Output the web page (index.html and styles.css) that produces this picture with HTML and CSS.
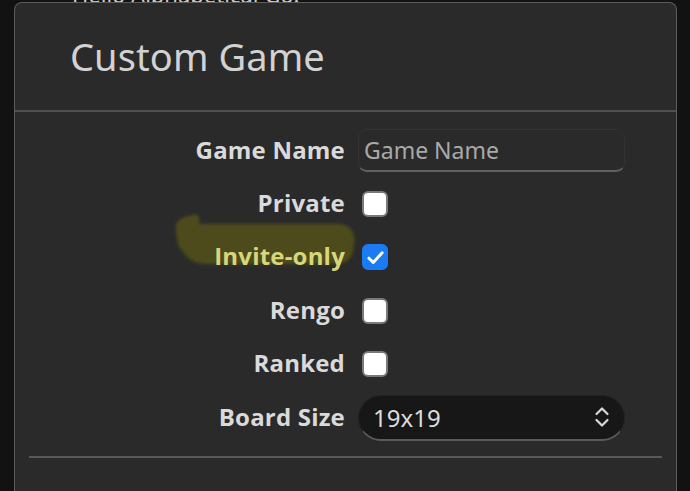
FILE: index.html
```html
<!DOCTYPE html>
<html lang="en">

<head>
    <meta charset="utf-8">
    <title>Custom Game</title>
    <link rel="stylesheet" href="styles.css">
</head>

<body>
<div class="behind">Hello Alphabetical Go!</div>

<div class="dialog">
    <div class="dlgHead">
        <h1 class="title">Custom Game</h1>
    </div>

    <div class="dlgBody">
        <label class="lbl" for="gname">Game Name</label>
        <div class="ctl">
            <input type="text" id="gname" class="txt" placeholder="Game Name"/>
        </div>

        <label class="lbl" for="private">Private</label>
        <div class="ctl">
            <span class="box" id="private"></span>
        </div>

        <label class="lbl marked" for="invite"><span class="hl"><i class="marker"></i><b>Invite-only</b></span></label>
        <div class="ctl">
            <span class="box on" id="invite">
                <svg viewBox="0 0 24 24" width="21" height="21">
                    <path d="M4.5 12.8l4.9 4.9L19.6 6.6" fill="none" stroke="#fff" stroke-width="3.4" stroke-linecap="round" stroke-linejoin="round"/>
                </svg>
            </span>
        </div>

        <label class="lbl" for="rengo">Rengo</label>
        <div class="ctl">
            <span class="box" id="rengo"></span>
        </div>

        <label class="lbl" for="ranked">Ranked</label>
        <div class="ctl">
            <span class="box" id="ranked"></span>
        </div>

        <label class="lbl" for="bsize">Board Size</label>
        <div class="ctl">
            <div class="sel" id="bsize">
                <span>19x19</span>
                <svg class="chev" viewBox="0 0 16 24" width="16" height="24">
                    <path d="M2.5 9L8 3.5 13.5 9M2.5 15L8 20.5 13.5 15" fill="none" stroke="#d8d8d8" stroke-width="2.2" stroke-linecap="round" stroke-linejoin="round"/>
                </svg>
            </div>
        </div>
    </div>

    <div class="dlgLine"></div>
</div>
</body>

</html>
```

FILE: styles.css
```css
* {
    margin: 0;
    padding: 0;
    box-sizing: border-box;
}

html, body {
    height: 100%;
    overflow: hidden;
}

body {
    background-color: #121212;
    font-family: "Open Sans", "Noto Sans", sans-serif;
    color: #dcdcdc;
}

/* page text that sits under the dialog */
.behind {
    margin-top: -17px;
    margin-bottom: -4px;
    margin-left: 72px;
    height: 23px;
    font-size: 22px;
    line-height: 23px;
    color: #cfcfcf;
    font-family: "Noto Sans", sans-serif;
}

.dialog {
    position: relative;
    margin-left: 14px;
    width: 663px;
    height: 489px;
    background-color: #2a2a2a;
    border: 1px solid #5c5c5c;
    border-bottom: none;
    border-radius: 8px 8px 0 0;
}

.dlgHead {
    height: 109px;
    border-bottom: 2px solid #505050;
    display: flex;
    align-items: center;
    padding-left: 55px;
    padding-bottom: 2px;
}

.title {
    font-family: "Noto Sans", sans-serif;
    font-weight: 400;
    font-size: 38px;
    color: #d2d2d2;
    letter-spacing: 0.1px;
}

.dlgBody {
    display: grid;
    grid-template-columns: 330px 267px;
    grid-auto-rows: 53.4px;
    column-gap: 13px;
    align-items: center;
    padding-top: 12px;
}

.lbl {
    text-align: right;
    font-weight: 700;
    font-size: 24px;
    letter-spacing: 0.2px;
    color: #dadada;
    margin-top: -3px;
}

/* the hand-drawn highlight over Invite-only */
.lbl.marked {
    color: #d8d67a;
}

.hl {
    position: relative;
    display: inline-block;
}

.hl b {
    position: relative;
    font-weight: 700;
}

.marker {
    position: absolute;
    left: -36px;
    top: -15px;
    width: 176px;
    height: 40px;
    background-color: #4d4b1b;
    border-radius: 12px 20px 16px 34px;
    transform: skewX(-6deg);
    filter: blur(1.5px);
}

.marker::before {
    content: "";
    position: absolute;
    left: -2px;
    top: -8px;
    width: 24px;
    height: 38px;
    background-color: #4d4b1b;
    border-radius: 10px 4px 4px 14px;
    transform: rotate(-14deg);
}

.ctl {
    display: flex;
    align-items: center;
}

.txt {
    width: 100%;
    height: 43px;
    background-color: #2a2a2a;
    border: 1px solid #333;
    border-bottom: 2px solid #616161;
    border-radius: 9px;
    padding-left: 5px;
    font-family: "Noto Sans", sans-serif;
    font-size: 23px;
    color: #dcdcdc;
    outline: none;
}

.txt::placeholder {
    color: #a9a9a9;
}

.box {
    display: inline-flex;
    align-items: center;
    justify-content: center;
    width: 26px;
    height: 26px;
    margin-left: 4px;
    background-color: #ffffff;
    border: 2px solid #7a7a7a;
    border-radius: 6px;
}

.box.on {
    background-color: #1a7bf2;
    border-color: #1a7bf2;
}

.sel {
    width: 100%;
    height: 46px;
    display: flex;
    align-items: center;
    justify-content: space-between;
    background-color: #171717;
    border: 1px solid #222;
    border-bottom: 2px solid #5a5a5a;
    border-radius: 23px;
    padding-left: 14px;
    padding-right: 14px;
    font-family: "Noto Sans", sans-serif;
    font-size: 24px;
    color: #dcdcdc;
}

.dlgLine {
    margin: 12px 14px 0 14px;
    height: 2px;
    background-color: #585858;
}
```
